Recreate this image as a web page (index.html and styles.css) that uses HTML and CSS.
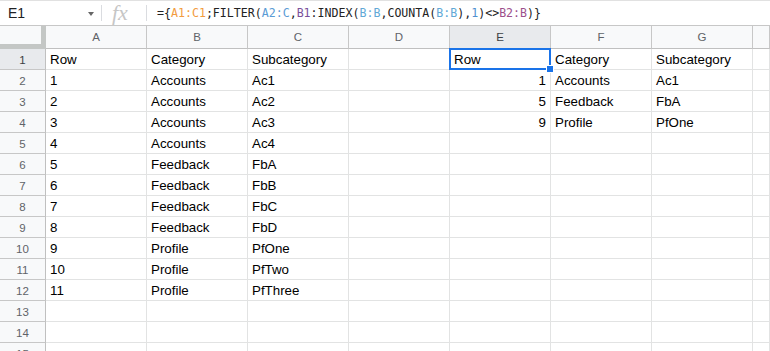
FILE: index.html
```html
<!DOCTYPE html>
<html lang="en">
<head>
  <meta charset="UTF-8" />
  <title>Sheet</title>
  <link rel="stylesheet" href="styles.css">
</head>
<body>
  <div class="formula-bar">
    <div class="name-box">
      <span>E1</span>
      <span class="caret"></span>
    </div>
    <div class="fx">fx</div>
    <div class="formula">={<span class="r1">A1:C1</span>;FILTER(<span class="r2">A2:C</span>,<span class="r3">B1</span>:INDEX(<span class="r4">B:B</span>,COUNTA(<span class="r4">B:B</span>),<span class="num">1</span>)&lt;&gt;<span class="r5">B2:B</span>)}</div>
  </div>

  <div class="sheet">
    <div class="row head">
      <div class="corner"></div>
      <div class="col">A</div><div class="col">B</div><div class="col">C</div><div class="col">D</div>
      <div class="col active">E</div><div class="col">F</div><div class="col">G</div><div class="col"></div>
    </div>
    <div class="row">
      <div class="rn active">1</div>
      <div class="c">Row</div><div class="c">Category</div><div class="c">Subcategory</div><div class="c"></div>
      <div class="c selected">Row</div><div class="c">Category</div><div class="c">Subcategory</div><div class="c"></div>
    </div>
    <div class="row">
      <div class="rn">2</div>
      <div class="c">1</div><div class="c">Accounts</div><div class="c">Ac1</div><div class="c"></div>
      <div class="c n">1</div><div class="c">Accounts</div><div class="c">Ac1</div><div class="c"></div>
    </div>
    <div class="row">
      <div class="rn">3</div>
      <div class="c">2</div><div class="c">Accounts</div><div class="c">Ac2</div><div class="c"></div>
      <div class="c n">5</div><div class="c">Feedback</div><div class="c">FbA</div><div class="c"></div>
    </div>
    <div class="row">
      <div class="rn">4</div>
      <div class="c">3</div><div class="c">Accounts</div><div class="c">Ac3</div><div class="c"></div>
      <div class="c n">9</div><div class="c">Profile</div><div class="c">PfOne</div><div class="c"></div>
    </div>
    <div class="row">
      <div class="rn">5</div>
      <div class="c">4</div><div class="c">Accounts</div><div class="c">Ac4</div><div class="c"></div>
      <div class="c"></div><div class="c"></div><div class="c"></div><div class="c"></div>
    </div>
    <div class="row">
      <div class="rn">6</div>
      <div class="c">5</div><div class="c">Feedback</div><div class="c">FbA</div><div class="c"></div>
      <div class="c"></div><div class="c"></div><div class="c"></div><div class="c"></div>
    </div>
    <div class="row">
      <div class="rn">7</div>
      <div class="c">6</div><div class="c">Feedback</div><div class="c">FbB</div><div class="c"></div>
      <div class="c"></div><div class="c"></div><div class="c"></div><div class="c"></div>
    </div>
    <div class="row">
      <div class="rn">8</div>
      <div class="c">7</div><div class="c">Feedback</div><div class="c">FbC</div><div class="c"></div>
      <div class="c"></div><div class="c"></div><div class="c"></div><div class="c"></div>
    </div>
    <div class="row">
      <div class="rn">9</div>
      <div class="c">8</div><div class="c">Feedback</div><div class="c">FbD</div><div class="c"></div>
      <div class="c"></div><div class="c"></div><div class="c"></div><div class="c"></div>
    </div>
    <div class="row">
      <div class="rn">10</div>
      <div class="c">9</div><div class="c">Profile</div><div class="c">PfOne</div><div class="c"></div>
      <div class="c"></div><div class="c"></div><div class="c"></div><div class="c"></div>
    </div>
    <div class="row">
      <div class="rn">11</div>
      <div class="c">10</div><div class="c">Profile</div><div class="c">PfTwo</div><div class="c"></div>
      <div class="c"></div><div class="c"></div><div class="c"></div><div class="c"></div>
    </div>
    <div class="row">
      <div class="rn">12</div>
      <div class="c">11</div><div class="c">Profile</div><div class="c">PfThree</div><div class="c"></div>
      <div class="c"></div><div class="c"></div><div class="c"></div><div class="c"></div>
    </div>
    <div class="row">
      <div class="rn">13</div>
      <div class="c"></div><div class="c"></div><div class="c"></div><div class="c"></div>
      <div class="c"></div><div class="c"></div><div class="c"></div><div class="c"></div>
    </div>
    <div class="row">
      <div class="rn">14</div>
      <div class="c"></div><div class="c"></div><div class="c"></div><div class="c"></div>
      <div class="c"></div><div class="c"></div><div class="c"></div><div class="c"></div>
    </div>
    <div class="row">
      <div class="rn">15</div>
      <div class="c"></div><div class="c"></div><div class="c"></div><div class="c"></div>
      <div class="c"></div><div class="c"></div><div class="c"></div><div class="c"></div>
    </div>
  </div>
</body>
</html>
```

FILE: styles.css
```css
* {
  box-sizing: border-box;
}

body {
  margin: 0;
  background: #fff;
  font-family: 'Liberation Sans', Arial, sans-serif;
  color: #000;
  overflow: hidden;
  height: 351px;
}

/* formula bar */
.formula-bar {
  display: flex;
  align-items: center;
  height: 26px;
  border-top: 1px solid #e1e1e1;
  border-bottom: 1px solid #c7c7c7;
}

.name-box {
  display: flex;
  align-items: center;
  justify-content: space-between;
  width: 102px;
  height: 16px;
  padding: 0 7px 0 8px;
  border-right: 1px solid #dadce0;
  font-size: 14px;
  color: #202124;
}

.caret {
  width: 0;
  height: 0;
  border-left: 3.5px solid transparent;
  border-right: 3.5px solid transparent;
  border-top: 4px solid #666;
  margin-top: 2px;
}

.fx {
  width: 45px;
  height: 16px;
  padding-left: 10px;
  border-right: 1px solid #dadce0;
  font-family: 'Liberation Serif', serif;
  font-style: italic;
  font-size: 22px;
  line-height: 16px;
  color: #c6c6c6;
}

.formula {
  padding-left: 10px;
  font-family: 'DejaVu Sans Mono', 'Liberation Mono', monospace;
  font-size: 11.6px;
  color: #222;
}

.r1 { color: #f29b3e; }
.r2 { color: #5a9bd5; }
.r3 { color: #7a4f9a; }
.r4 { color: #62a8d6; }
.r5 { color: #9c4f8c; }
.num { color: #4f8fd0; }

/* grid */
.row {
  display: grid;
  grid-template-columns: 46px repeat(7, 101px) 1fr;
  height: 21px;
}

.row.head {
  height: 23px;
}

.c {
  border-right: 1px solid #e2e3e3;
  border-bottom: 1px solid #e2e3e3;
  padding: 2px 4px 0 4px;
  font-size: 13.33px;
  line-height: 18px;
  white-space: nowrap;
  overflow: hidden;
}

.c.n {
  text-align: right;
}

.c.selected {
  position: relative;
  overflow: visible;
}

.c.selected::before {
  content: '';
  position: absolute;
  left: -1px;
  top: -1px;
  right: -1px;
  bottom: -1px;
  border: 2px solid #1a73e8;
}

.c.selected::after {
  content: '';
  position: absolute;
  right: -4px;
  bottom: -4px;
  width: 6px;
  height: 6px;
  background: #1a73e8;
  border: 1px solid #fff;
  z-index: 2;
}

.rn,
.col,
.corner {
  background: #f8f9fa;
  color: #5f6368;
  font-size: 11.5px;
  text-align: center;
}

.rn {
  border-right: 1px solid #c0c0c0;
  border-bottom: 1px solid #c7c7c7;
  padding-top: 2px;
  line-height: 18px;
}

.col {
  border-right: 1px solid #c7c7c7;
  border-bottom: 1px solid #c0c0c0;
  line-height: 22px;
}

.rn.active,
.col.active {
  background: #e8eaed;
  color: #3c4043;
}

.corner {
  border-right: 5px solid #c4c7c5;
  border-bottom: 5px solid #c4c7c5;
}
```
